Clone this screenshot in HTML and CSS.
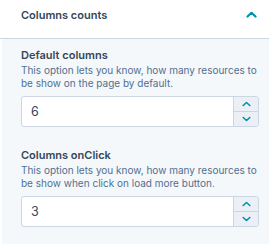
FILE: index.html
```html
<!DOCTYPE html>
<html>
<head>
<meta charset="utf-8">
<link rel="stylesheet" href="styles.css">
</head>
<body>
<div class="card">
  <div class="header">
    <span class="title">Columns counts</span>
    <svg class="chev" width="11" height="7" viewBox="0 0 11 7"><path d="M1.5 5.5 L5.5 1.8 L9.5 5.5" fill="none" stroke="#0091ae" stroke-width="2.2" stroke-linecap="round" stroke-linejoin="round"/></svg>
  </div>
  <div class="panel">
    <div class="field">
      <div class="label">Default columns</div>
      <div class="help">This option lets you know, how many resources to be show on the page by default.</div>
      <div class="num">
        <div class="value">6</div>
        <div class="stepper">
          <div class="step"><svg width="9" height="6" viewBox="0 0 9 6"><path d="M1.2 4.5 L4.5 1.5 L7.8 4.5" fill="none" stroke="#0091ae" stroke-width="1.6" stroke-linecap="round" stroke-linejoin="round"/></svg></div>
          <div class="step"><svg width="9" height="6" viewBox="0 0 9 6"><path d="M1.2 1.5 L4.5 4.5 L7.8 1.5" fill="none" stroke="#0091ae" stroke-width="1.6" stroke-linecap="round" stroke-linejoin="round"/></svg></div>
        </div>
      </div>
    </div>
    <div class="field second">
      <div class="label">Columns onClick</div>
      <div class="help">This option lets you know, how many resources to be show when click on load more button.</div>
      <div class="num">
        <div class="value">3</div>
        <div class="stepper">
          <div class="step"><svg width="9" height="6" viewBox="0 0 9 6"><path d="M1.2 4.5 L4.5 1.5 L7.8 4.5" fill="none" stroke="#0091ae" stroke-width="1.6" stroke-linecap="round" stroke-linejoin="round"/></svg></div>
          <div class="step"><svg width="9" height="6" viewBox="0 0 9 6"><path d="M1.2 1.5 L4.5 4.5 L7.8 1.5" fill="none" stroke="#0091ae" stroke-width="1.6" stroke-linecap="round" stroke-linejoin="round"/></svg></div>
        </div>
      </div>
    </div>
  </div>
</div>
</body>
</html>
```
FILE: styles.css
```css
html, body {
  margin: 0;
  padding: 0;
  background: #ffffff;
}
body {
  font-family: "Inter", "Noto Sans", sans-serif;
  color: #33475b;
  width: 269px;
  height: 244px;
  overflow: hidden;
}
.card {
  display: flex;
  flex-direction: column;
  height: 244px;
}
.header {
  height: 29px;
  display: flex;
  align-items: center;
  justify-content: space-between;
  padding: 0 12px 9px 21px;
  border-bottom: 1px solid #cbd6e2;
  flex: none;
}
.title {
  font-size: 11px;
  font-weight: 600;
}
.chev {
  display: block;
}
.panel {
  flex: 1;
  background: #f5f8fa;
  margin-left: 2px;
  padding: 8px 10px 0 19px;
}
.field.second {
  margin-top: 20px;
}
.label {
  font-size: 11px;
  font-weight: 600;
  line-height: 16px;
}
.help {
  font-size: 10px;
  line-height: 13px;
  color: #516f90;
  margin-top: 1px;
}
.num {
  margin-top: 6px;
  height: 29px;
  display: flex;
  background: #ffffff;
  border: 1px solid #cbd6e2;
  border-radius: 3px;
  overflow: hidden;
}
.value {
  flex: 1;
  padding-left: 9px;
  font-size: 12.5px;
  line-height: 29px;
}
.stepper {
  width: 24px;
  display: flex;
  flex-direction: column;
  border-left: 1px solid #cbd6e2;
  background: #eaf0f6;
}
.step {
  flex: 1;
  display: flex;
  align-items: center;
  justify-content: center;
}
.step + .step {
  border-top: 1px solid #cbd6e2;
}
.step svg {
  display: block;
}
```
